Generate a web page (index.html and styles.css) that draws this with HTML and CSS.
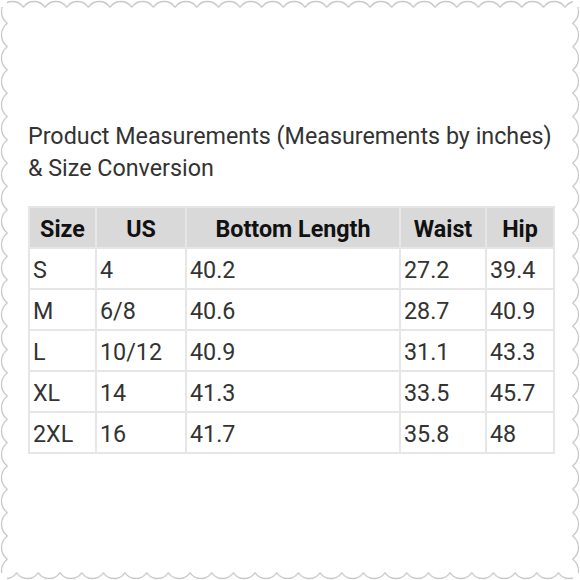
FILE: index.html
```html
<!DOCTYPE html>
<html>
<head>
<meta charset="utf-8">
<link rel="stylesheet" href="styles.css">
</head>
<body>
<div class="page">
  <svg class="frame" width="580" height="580" viewBox="0 0 580 580" xmlns="http://www.w3.org/2000/svg">
    <defs>
      <pattern id="top" patternUnits="userSpaceOnUse" x="1.67" y="0" width="21.67" height="10">
        <path d="M0,7.5 A12.8,12.8 0 0 1 21.67,7.5" fill="none" stroke="#c8c8c8" stroke-width="1.3"/>
      </pattern>
      <pattern id="bottom" patternUnits="userSpaceOnUse" x="-5" y="570" width="21.67" height="10">
        <path d="M0,2.5 A12.8,12.8 0 0 0 21.67,2.5" fill="none" stroke="#c8c8c8" stroke-width="1.3"/>
      </pattern>
      <pattern id="left" patternUnits="userSpaceOnUse" x="0" y="0" width="10" height="23.3">
        <path d="M7.5,0 A14.3,14.3 0 0 0 7.5,23.3" fill="none" stroke="#c8c8c8" stroke-width="1.3"/>
      </pattern>
      <pattern id="right" patternUnits="userSpaceOnUse" x="570" y="0" width="10" height="23.3">
        <path d="M2.5,0 A14.3,14.3 0 0 1 2.5,23.3" fill="none" stroke="#c8c8c8" stroke-width="1.3"/>
      </pattern>
    </defs>
    <rect x="7" y="0" width="566" height="10" fill="url(#top)"/>
    <rect x="7" y="570" width="566" height="10" fill="url(#bottom)"/>
    <rect x="0" y="7" width="10" height="566" fill="url(#left)"/>
    <rect x="570" y="7" width="10" height="566" fill="url(#right)"/>
  </svg>
  <div class="content">
    <p class="title">Product Measurements (Measurements by inches)<br>&amp; Size Conversion</p>
    <table class="sizes">
      <colgroup>
        <col class="c-size"><col class="c-us"><col class="c-len"><col class="c-waist"><col class="c-hip">
      </colgroup>
      <thead>
        <tr><th>Size</th><th>US</th><th>Bottom Length</th><th>Waist</th><th>Hip</th></tr>
      </thead>
      <tbody>
        <tr><td>S</td><td>4</td><td>40.2</td><td>27.2</td><td>39.4</td></tr>
        <tr><td>M</td><td>6/8</td><td>40.6</td><td>28.7</td><td>40.9</td></tr>
        <tr><td>L</td><td>10/12</td><td>40.9</td><td>31.1</td><td>43.3</td></tr>
        <tr><td>XL</td><td>14</td><td>41.3</td><td>33.5</td><td>45.7</td></tr>
        <tr><td>2XL</td><td>16</td><td>41.7</td><td>35.8</td><td>48</td></tr>
      </tbody>
    </table>
  </div>
</div>
</body>
</html>
```

FILE: styles.css
```css
html, body {
  margin: 0;
  padding: 0;
  background: #ffffff;
}
body {
  font-family: Roboto, "Liberation Sans", sans-serif;
  color: #333333;
}
.page {
  position: relative;
  width: 580px;
  height: 580px;
  overflow: hidden;
  background: #ffffff;
}
.frame {
  position: absolute;
  left: 0;
  top: 0;
}
.content {
  padding: 120px 0 0 28px;
}
.title {
  margin: 0 0 22px 0;
  font-size: 23.3px;
  line-height: 32px;
  color: #333333;
  font-weight: 400;
}
.sizes {
  border-collapse: separate;
  border-spacing: 2px;
  background: #e6e6e6;
  table-layout: fixed;
  width: 527px;
  font-size: 23.3px;
}
.c-size { width: 65px; }
.c-us { width: 88px; }
.c-len { width: 212px; }
.c-waist { width: 84px; }
.c-hip { width: 66px; }
.sizes th {
  background: #d9d9d9;
  color: #111111;
  font-weight: 700;
  height: 37px;
  padding: 2px 0 0 0;
  text-align: center;
}
.sizes td {
  background: #ffffff;
  color: #333333;
  height: 36px;
  padding: 3px 0 0 3px;
  text-align: left;
}
```
